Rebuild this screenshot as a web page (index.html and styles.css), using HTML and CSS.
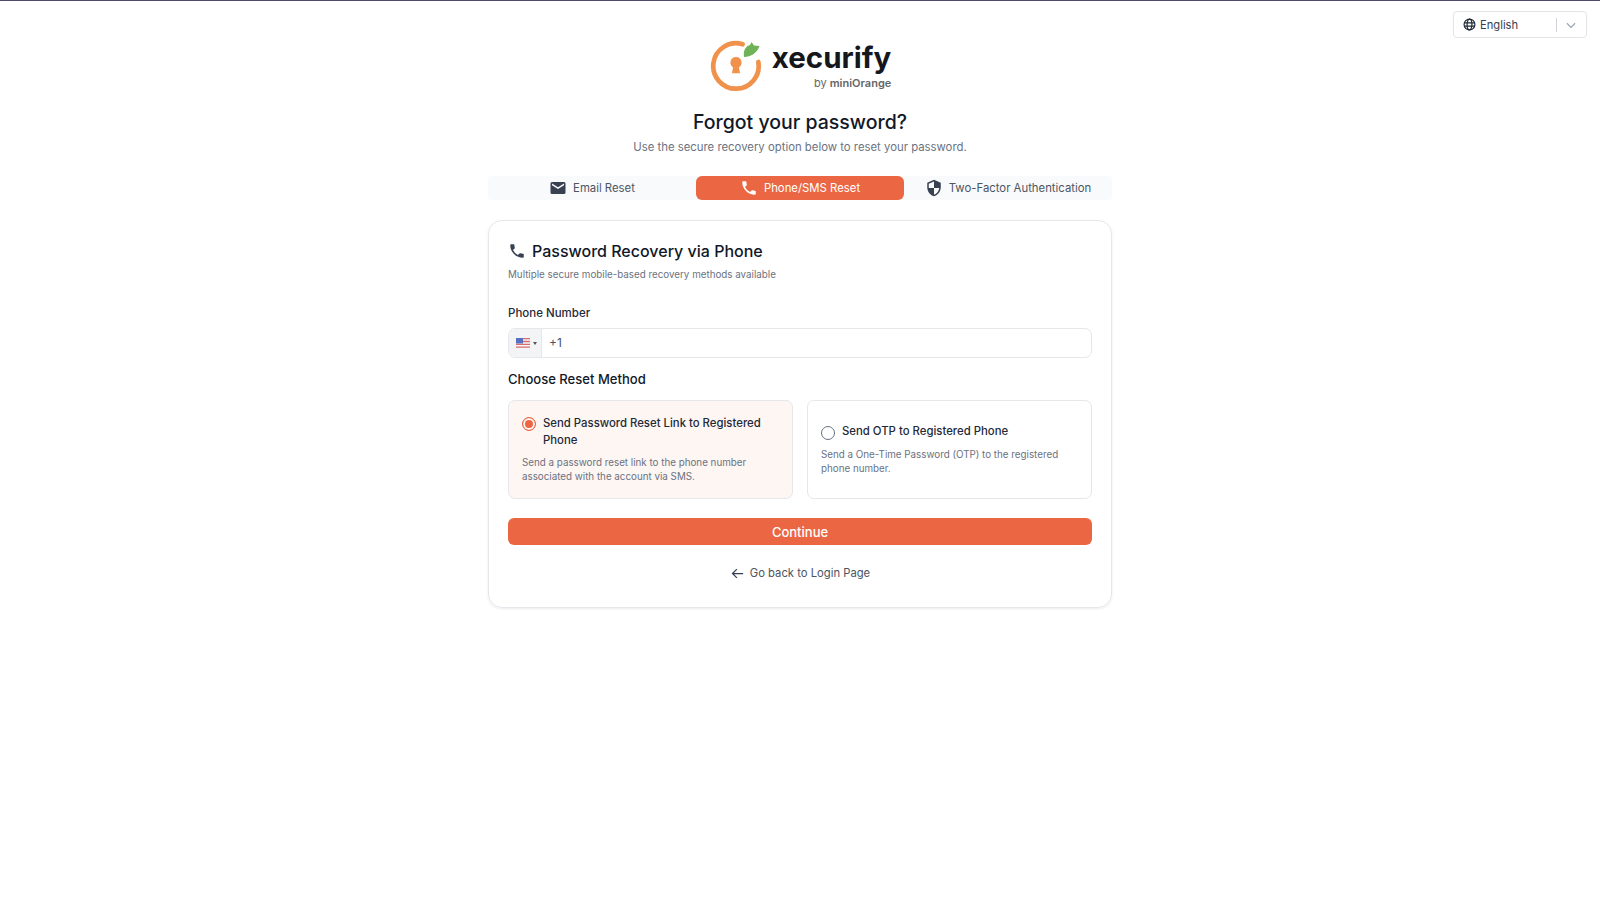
FILE: index.html
```html
<!DOCTYPE html>
<html lang="en">
<head>
	<meta charset="UTF-8">
	<meta name="viewport" content="width=device-width, initial-scale=1.0">
	<title>Forgot your password?</title>
	<link rel="stylesheet" href="styles.css">
</head>
<body>

	<div class="lang">
		<svg class="lang__globe" viewBox="0 0 24 24" fill="none" stroke="#1f2937" stroke-width="2.2"><circle cx="12" cy="12" r="10"/><ellipse cx="12" cy="12" rx="4.5" ry="10"/><path d="M2.5 9h19M2.5 15h19"/></svg>
		<span class="lang__name">English</span>
		<span class="lang__sep"></span>
		<svg class="lang__arrow" viewBox="0 0 24 24" fill="none" stroke="#9ca3af" stroke-width="2"><path d="M5 9l7 7 7-7"/></svg>
	</div>

	<main class="page">

		<div class="logo">
			<svg class="logo__mark" viewBox="0 0 52 52" fill="none">
				<path d="M32.600 4.300A22.700 22.700 0 1 0 48.300 22" stroke="#f0924c" stroke-width="4.700" stroke-linecap="round"/>
				<path d="M34 17C33 10 36 6 40 5L41.500 2 44 5.500 49.500 6C47 13 41 17 34 17z" fill="#6fb257"/>
				<path d="M26 17a5.600 5.600 0 0 1 3 10.300l1 6h-8l1-6A5.600 5.600 0 0 1 26 17z" fill="#f0924c"/>
			</svg>
			<div class="logo__text">
				<div class="logo__name">xecurify</div>
				<div class="logo__by">by <b>miniOrange</b></div>
			</div>
		</div>

		<h1 class="title">Forgot your password?</h1>
		<p class="subtitle">Use the secure recovery option below to reset your password.</p>

		<div class="tabs">
			<div class="tabs__item">
				<svg class="tabs__icon" viewBox="0 0 24 24" fill="#374151"><path d="M20 4H4a2 2 0 0 0-2 2v12a2 2 0 0 0 2 2h16a2 2 0 0 0 2-2V6a2 2 0 0 0-2-2zm0 4.200l-8 5-8-5V6l8 5 8-5v2.200z"/></svg>
				Email Reset
			</div>
			<div class="tabs__item tabs__item--active">
				<svg class="tabs__icon" viewBox="0 0 24 24" fill="#fff"><path d="M6.600 10.800a15 15 0 0 0 6.600 6.600l2.200-2.200a1 1 0 0 1 1-.25 11.400 11.400 0 0 0 3.600.57 1 1 0 0 1 1 1V20a1 1 0 0 1-1 1A17 17 0 0 1 3 4a1 1 0 0 1 1-1h3.500a1 1 0 0 1 1 1c0 1.250.2 2.450.57 3.570a1 1 0 0 1-.25 1z"/></svg>
				Phone/SMS Reset
			</div>
			<div class="tabs__item">
				<svg class="tabs__icon" viewBox="0 0 24 24" fill="#374151"><path d="M12 1L3 5v6c0 5.600 3.800 10.700 9 12 5.200-1.300 9-6.400 9-12V5l-9-4zm0 11h7c-.5 4.100-3.300 7.800-7 8.900V12H5V6.300l7-3.100V12z"/></svg>
				Two-Factor Authentication
			</div>
		</div>

		<div class="card">
			<h2 class="card__title">
				<svg class="card__title__icon" viewBox="0 0 24 24" fill="#374151"><path d="M6.600 10.800a15 15 0 0 0 6.600 6.600l2.200-2.200a1 1 0 0 1 1-.25 11.400 11.400 0 0 0 3.600.57 1 1 0 0 1 1 1V20a1 1 0 0 1-1 1A17 17 0 0 1 3 4a1 1 0 0 1 1-1h3.500a1 1 0 0 1 1 1c0 1.250.2 2.450.57 3.570a1 1 0 0 1-.25 1z"/></svg>
				Password Recovery via Phone
			</h2>
			<p class="card__sub">Multiple secure mobile-based recovery methods available</p>

			<div class="field__label">Phone Number</div>
			<div class="phone">
				<div class="phone__flag">
					<svg class="phone__flag__img" viewBox="0 0 14 10">
						<rect width="14" height="10" fill="#f3f4f6"/>
						<path d="M0 .7h14M0 3.500h14M0 6.300h14M0 9.100h14" stroke="#dc6b6b" stroke-width="1.300"/>
						<rect width="7" height="5.500" fill="#5b6fc0"/>
					</svg>
					<span class="phone__caret"></span>
				</div>
				<div class="phone__value">+1</div>
			</div>

			<div class="section__label">Choose Reset Method</div>

			<div class="methods">
				<div class="method method--selected">
					<div class="method__head">
						<span class="radio radio--on"></span>
						<span class="method__name">Send Password Reset Link to Registered Phone</span>
					</div>
					<p class="method__desc">Send a password reset link to the phone number associated with the account via SMS.</p>
				</div>
				<div class="method">
					<div class="method__head">
						<span class="radio"></span>
						<span class="method__name">Send OTP to Registered Phone</span>
					</div>
					<p class="method__desc">Send a One-Time Password (OTP) to the registered phone number.</p>
				</div>
			</div>

			<button class="btn">Continue</button>

			<a class="back">
				<svg class="back__arrow" viewBox="0 0 24 24" fill="none" stroke="#374151" stroke-width="2"><path d="M21 12H4M11 5l-7 7 7 7"/></svg>
				Go back to Login Page
			</a>
		</div>

	</main>

</body>
</html>
```

FILE: styles.css
```css
* {
	margin: 0;
	padding: 0;
	box-sizing: border-box;
	font-family: "Inter", "Noto Sans", sans-serif;
}

body {
	background: #fff;
	border-top: 1px solid #4b4a6b;
	min-height: 907px;
	overflow: hidden;
}

/* selector de idioma */
.lang {
	position: absolute;
	top: 11px;
	left: 1453px;
	width: 134px;
	height: 27px;
	border: 1px solid #e2e4e8;
	border-radius: 4px;
	display: flex;
	align-items: center;
	padding-left: 9px;
	font-size: 11.2px;
	color: #374151;
}

.lang__globe {
	width: 13px;
	height: 13px;
	margin-right: 4px;
}

.lang__name {
	width: 76px;
}

.lang__sep {
	width: 1px;
	height: 14px;
	background: #d1d5db;
}

.lang__arrow {
	width: 14px;
	height: 14px;
	margin-left: 7px;
}

.page {
	width: 624px;
	margin: 0 auto;
	display: flex;
	flex-direction: column;
	align-items: center;
}

/* logo */
.logo {
	display: flex;
	margin-top: 39px;
	margin-left: 1px;
	height: 52px;
}

.logo__mark {
	width: 52px;
	height: 52px;
	margin-right: 10px;
}

.logo__text {
	display: flex;
	flex-direction: column;
	align-items: flex-end;
}

.logo__name {
	font-size: 29.5px;
	line-height: 34px;
	font-weight: 700;
	color: #15171c;
}

.logo__by {
	font-size: 11px;
	line-height: 14px;
	color: #666;
	margin-top: 2px;
}

.logo__by b {
	font-weight: 600;
}

.title {
	font-size: 19.5px;
	line-height: 28px;
	font-weight: 500;
	color: #111827;
	margin-top: 16px;
}

.subtitle {
	font-size: 11.35px;
	line-height: 18px;
	color: #6b7280;
	margin-top: 2px;
}

/* tabs */
.tabs {
	width: 100%;
	height: 24px;
	margin-top: 20px;
	background: #f9fafb;
	border-radius: 4px;
	display: grid;
	grid-template-columns: repeat(3, 1fr);
}

.tabs__item {
	display: flex;
	align-items: center;
	justify-content: center;
	gap: 6px;
	font-size: 11.35px;
	color: #4b5563;
	border-radius: 6px;
}

.tabs__item--active {
	background: #eb6743;
	color: #fff;
}

.tabs__icon {
	width: 18px;
	height: 18px;
}

/* tarjeta */
.card {
	width: 100%;
	height: 388px;
	margin-top: 20px;
	border: 1px solid #e5e7eb;
	border-radius: 14px;
	box-shadow: 0 1px 3px rgba(0, 0, 0, .08);
	padding: 19px;
}

.card__title {
	display: flex;
	align-items: center;
	gap: 6px;
	font-size: 16px;
	line-height: 22px;
	font-weight: 500;
	color: #111827;
}

.card__title__icon {
	width: 18px;
	height: 18px;
}

.card__sub {
	font-size: 9.8px;
	line-height: 14px;
	color: #6b7280;
	margin-top: 6px;
}

.field__label {
	font-size: 11.5px;
	line-height: 16px;
	font-weight: 500;
	color: #1f2937;
	margin-top: 23px;
}

.phone {
	display: flex;
	height: 30px;
	margin-top: 7px;
	border: 1px solid #e5e7eb;
	border-radius: 7px;
	overflow: hidden;
}

.phone__flag {
	width: 33px;
	background: #f3f4f6;
	border-right: 1px solid #e5e7eb;
	display: flex;
	align-items: center;
	padding-left: 7px;
	gap: 3px;
}

.phone__flag__img {
	width: 14px;
	height: 10px;
}

.phone__caret {
	border-left: 2.500px solid transparent;
	border-right: 2.500px solid transparent;
	border-top: 3px solid #555;
}

.phone__value {
	font-size: 12px;
	line-height: 28px;
	color: #4b5563;
	padding-left: 7px;
}

.section__label {
	font-size: 13.05px;
	line-height: 18px;
	font-weight: 500;
	color: #111827;
	margin-top: 12px;
}

.methods {
	display: grid;
	grid-template-columns: 1fr 1fr;
	gap: 14px;
	margin-top: 12px;
}

.method {
	height: 99px;
	border: 1px solid #e5e7eb;
	border-radius: 7px;
	padding: 0 13px;
	display: flex;
	flex-direction: column;
	justify-content: center;
}

.method--selected {
	background: #fdf6f3;
}

.method__head {
	display: flex;
	gap: 7px;
}

.method__name {
	font-size: 11.35px;
	line-height: 17.400px;
	font-weight: 500;
	color: #1f2937;
}

.method__desc {
	font-size: 9.8px;
	line-height: 14px;
	color: #6b7280;
	margin-top: 7px;
}

.radio {
	flex: none;
	width: 14px;
	height: 14px;
	margin-top: 2.500px;
	border: 1px solid #6b7280;
	border-radius: 50%;
}

.radio--on {
	border-color: #ec6643;
	background: #ec6643;
	box-shadow: inset 0 0 0 2px #fdf6f3;
}

.btn {
	display: block;
	width: 100%;
	height: 27px;
	margin-top: 19px;
	border: none;
	border-radius: 6px;
	background: #eb6743;
	color: #fff;
	font-size: 13px;
	font-weight: 500;
}

.back {
	display: flex;
	align-items: center;
	justify-content: center;
	gap: 5px;
	margin-top: 19px;
	font-size: 11.25px;
	line-height: 18px;
	color: #4b5563;
}

.back__arrow {
	width: 15px;
	height: 15px;
}
```
